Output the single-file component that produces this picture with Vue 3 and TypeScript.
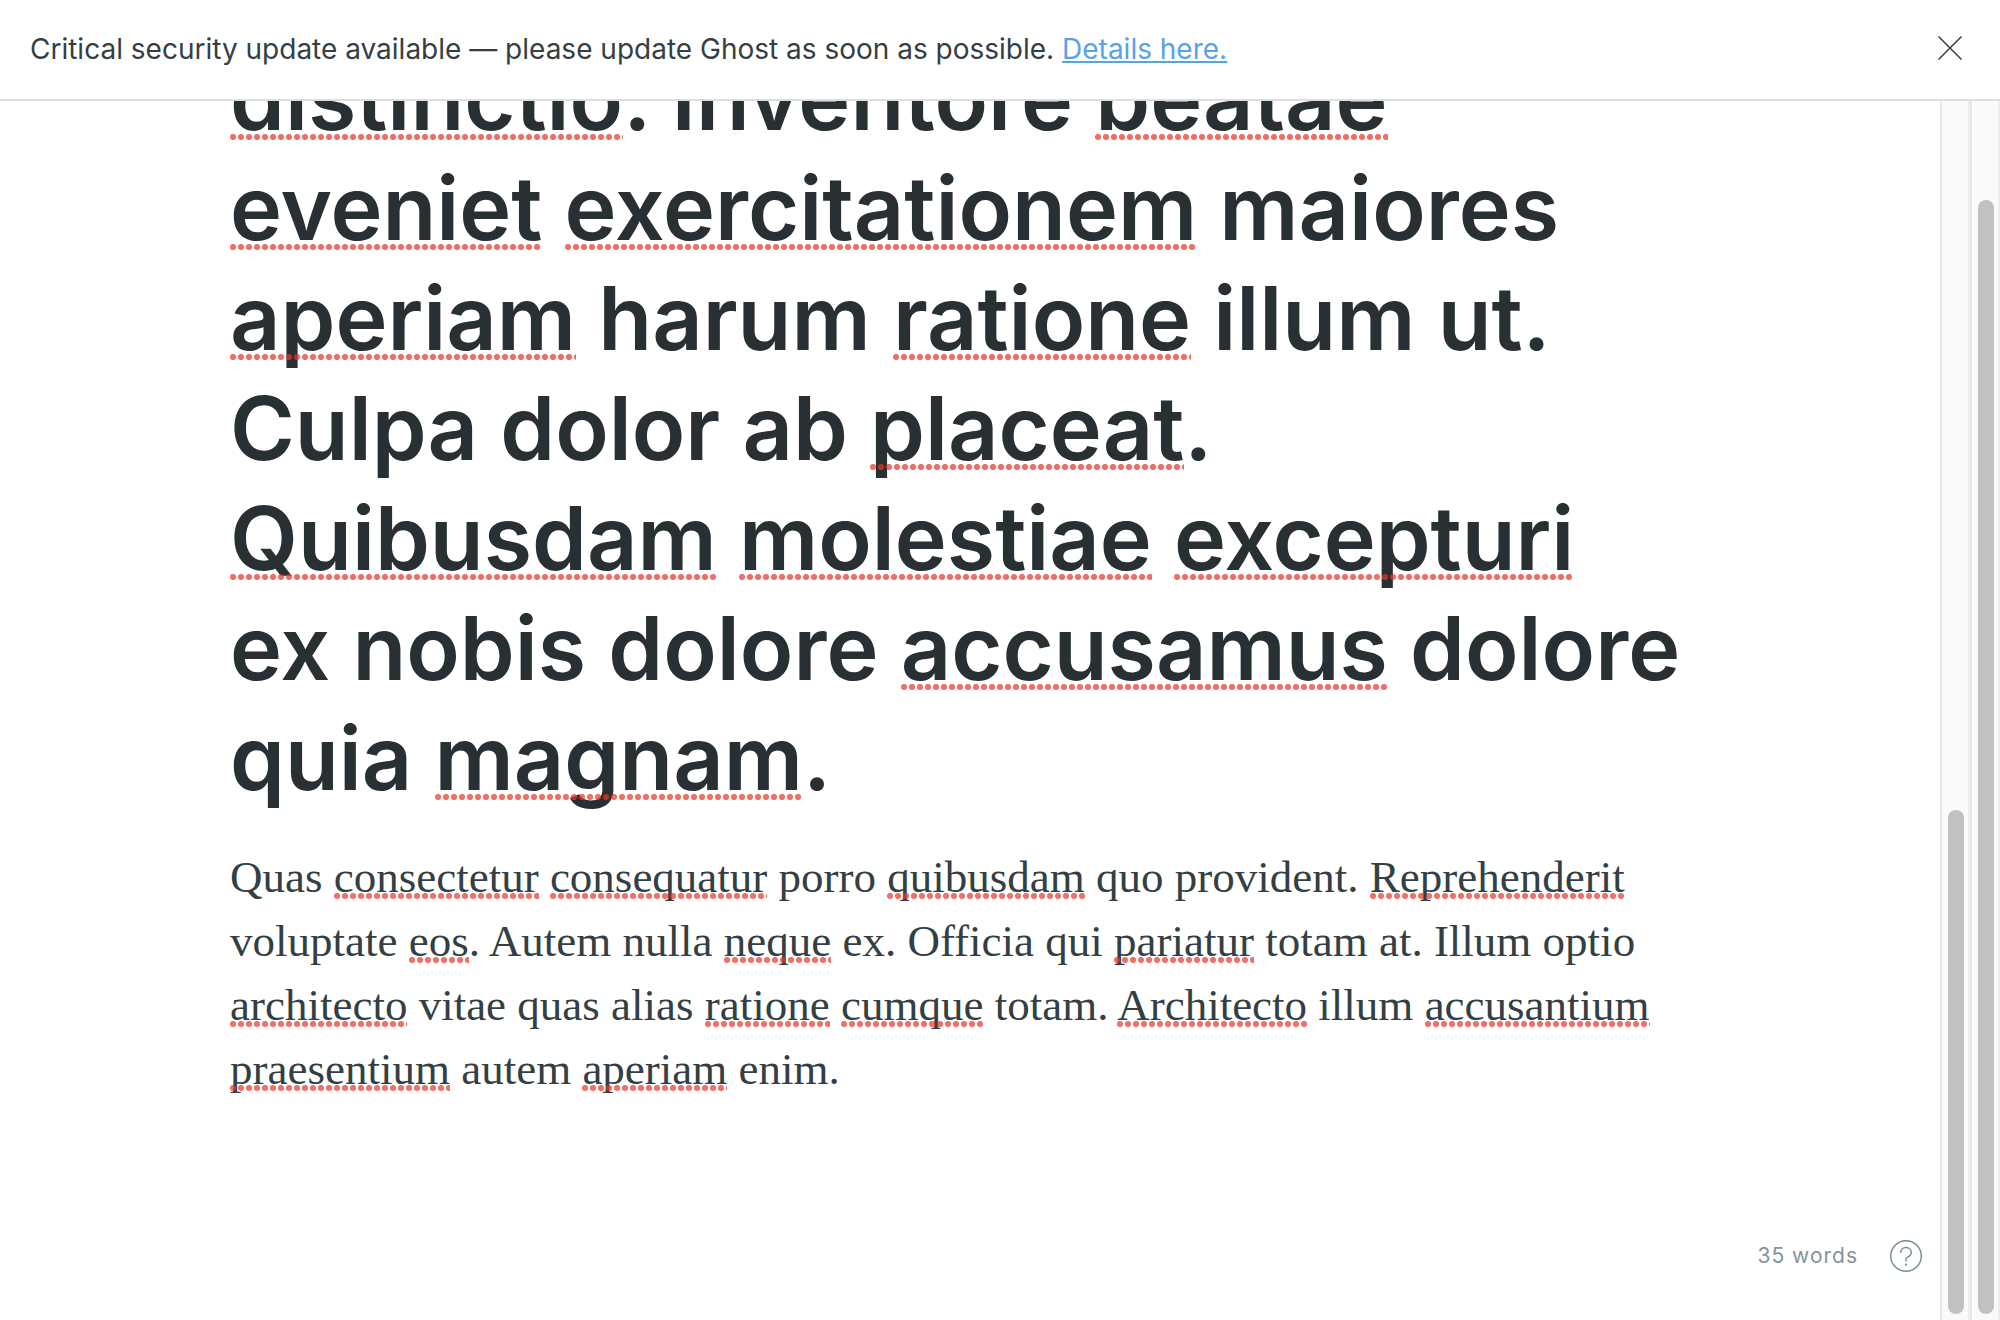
<script setup lang="ts">
import { ref } from 'vue'

interface Piece {
  text: string
  flagged: boolean
}

// Words wrapped in underscores are the ones the spell checker flags.
function parse(line: string): Piece[] {
  return line
    .split('_')
    .map((text, i) => ({ text, flagged: i % 2 === 1 }))
    .filter((piece) => piece.text.length > 0)
}

const titleLines = [
  '_distinctio_. Inventore _beatae_',
  '_eveniet_ _exercitationem_ maiores',
  '_aperiam_ harum _ratione_ illum ut.',
  'Culpa dolor ab _placeat_.',
  '_Quibusdam_ _molestiae_ _excepturi_',
  'ex nobis dolore _accusamus_ dolore',
  'quia _magnam_.',
].map(parse)

const bodyLines = [
  'Quas _consectetur_ _consequatur_ porro _quibusdam_ quo provident. _Reprehenderit_',
  'voluptate _eos_. Autem nulla _neque_ ex. Officia qui _pariatur_ totam at. Illum optio',
  '_architecto_ vitae quas alias _ratione_ _cumque_ totam. _Architecto_ illum _accusantium_',
  '_praesentium_ autem _aperiam_ enim.',
].map(parse)

const scrollbars = [
  { name: 'editor', before: 709, thumb: 504 },
  { name: 'page', before: 99, thumb: 1114 },
]

const bannerOpen = ref(true)
</script>

<template>
  <div class="app">
    <header v-if="bannerOpen" class="banner">
      <p class="banner-text">
        Critical security update available — please update Ghost as soon as possible.
        <a href="#details">Details here.</a>
      </p>
      <button class="close" type="button" aria-label="Close" @click="bannerOpen = false">
        <svg width="24" height="24" viewBox="0 0 24 24" aria-hidden="true">
          <path d="M0.5 0.5 23.5 23.5M23.5 0.5 0.5 23.5" />
        </svg>
      </button>
    </header>

    <div class="workspace">
      <main class="editor">
        <article class="content">
          <h1 class="title">
            <span v-for="(line, i) in titleLines" :key="i" class="line"><span
              v-for="(piece, j) in line"
              :key="j"
              :class="{ misspelled: piece.flagged }"
            >{{ piece.text }}</span></span>
          </h1>
          <p class="body">
            <span v-for="(line, i) in bodyLines" :key="i" class="line"><span
              v-for="(piece, j) in line"
              :key="j"
              :class="{ misspelled: piece.flagged }"
            >{{ piece.text }}</span></span>
          </p>
        </article>

        <footer class="status">
          <span>35 words</span>
          <button class="help" type="button" aria-label="Help">
            <svg width="32" height="32" viewBox="0 0 32 32" aria-hidden="true">
              <circle cx="16" cy="16" r="15.3" />
              <path d="M10.7 13V12.4A5.2 5.2 0 0 1 16 7.5C19 7.5 21.3 9.6 21.3 12.4C21.3 15.2 19.2 16.4 17.4 17.3C16.4 17.8 16 18.3 16 19.3V21.5" />
              <circle class="dot" cx="16" cy="24.6" r="1.1" />
            </svg>
          </button>
        </footer>
      </main>

      <div v-for="bar in scrollbars" :key="bar.name" class="track" :class="bar.name" aria-hidden="true">
        <div :style="{ flexGrow: bar.before }"></div>
        <div class="thumb" :style="{ flexGrow: bar.thumb }"></div>
      </div>
    </div>
  </div>
</template>

<style>
body {
  margin: 0;
  overflow: hidden;
  background: #fff;
}
</style>

<style scoped>
.app {
  display: flex;
  flex-direction: column;
  height: 100vh;
  font-family: Inter, 'Liberation Sans', sans-serif;
  color: #343f44;
}

.banner {
  display: flex;
  flex: none;
  align-items: center;
  justify-content: space-between;
  padding: 28px 30px;
  border-bottom: 2px solid #dddfde;
}

.banner-text {
  margin: 0;
  font-size: 28px;
  line-height: 43px;
}

.banner-text a {
  color: #57a3e8;
  text-decoration: underline;
  text-decoration-thickness: 2px;
  text-underline-offset: 2px;
  text-decoration-skip-ink: none;
}

button {
  display: flex;
  padding: 0;
  border: 0;
  background: none;
  cursor: pointer;
}

.close {
  padding: 0 8px 4px;
}

.close path {
  fill: none;
  stroke: #343f44;
  stroke-width: 1.5;
}

.workspace {
  display: flex;
  flex: 1;
  min-height: 0;
}

.editor {
  position: relative;
  display: flex;
  flex: 1;
  flex-direction: column;
  justify-content: flex-end;
  min-width: 0;
  overflow: hidden;
}

.content {
  width: 100%;
  max-width: 1480px;
  margin: 0 auto;
  padding-bottom: 219px;
}

.line {
  display: block;
  white-space: pre;
}

.title {
  margin: 0 0 32px;
  font-size: 88px;
  font-weight: 600;
  line-height: 110px;
  color: #283033;
}

.body {
  margin: 0;
  font-family: 'Liberation Serif', serif;
  font-size: 45px;
  line-height: 64px;
}

.misspelled {
  position: relative;
}

.misspelled::after {
  content: '';
  position: absolute;
  right: 0;
  bottom: 3px;
  left: 0;
  height: 6px;
  background: radial-gradient(circle at 3px 3px, rgba(235, 52, 38, 0.7) 2.7px, transparent 3.5px) 0 0 / 8px 6px repeat-x;
}

.title .misspelled::after {
  bottom: 11px;
}

.status {
  position: absolute;
  right: 18px;
  bottom: 48px;
  display: flex;
  align-items: center;
  gap: 32px;
  font-size: 21px;
  line-height: 32px;
  letter-spacing: 1px;
  color: #8295a0;
}

.help svg {
  fill: none;
  stroke: #738a94;
  stroke-width: 1.4;
}

.help .dot {
  fill: #738a94;
  stroke: none;
}

.track {
  display: flex;
  flex: none;
  flex-direction: column;
  box-sizing: border-box;
  width: 30px;
  padding: 0 4px 6px 6px;
  border-right: 2px solid #ececec;
  border-left: 2px solid #e6e6e6;
  background: #fafafa;
}

.thumb {
  width: 16px;
  border-radius: 8px;
  background: #c1c1c1;
}
</style>
